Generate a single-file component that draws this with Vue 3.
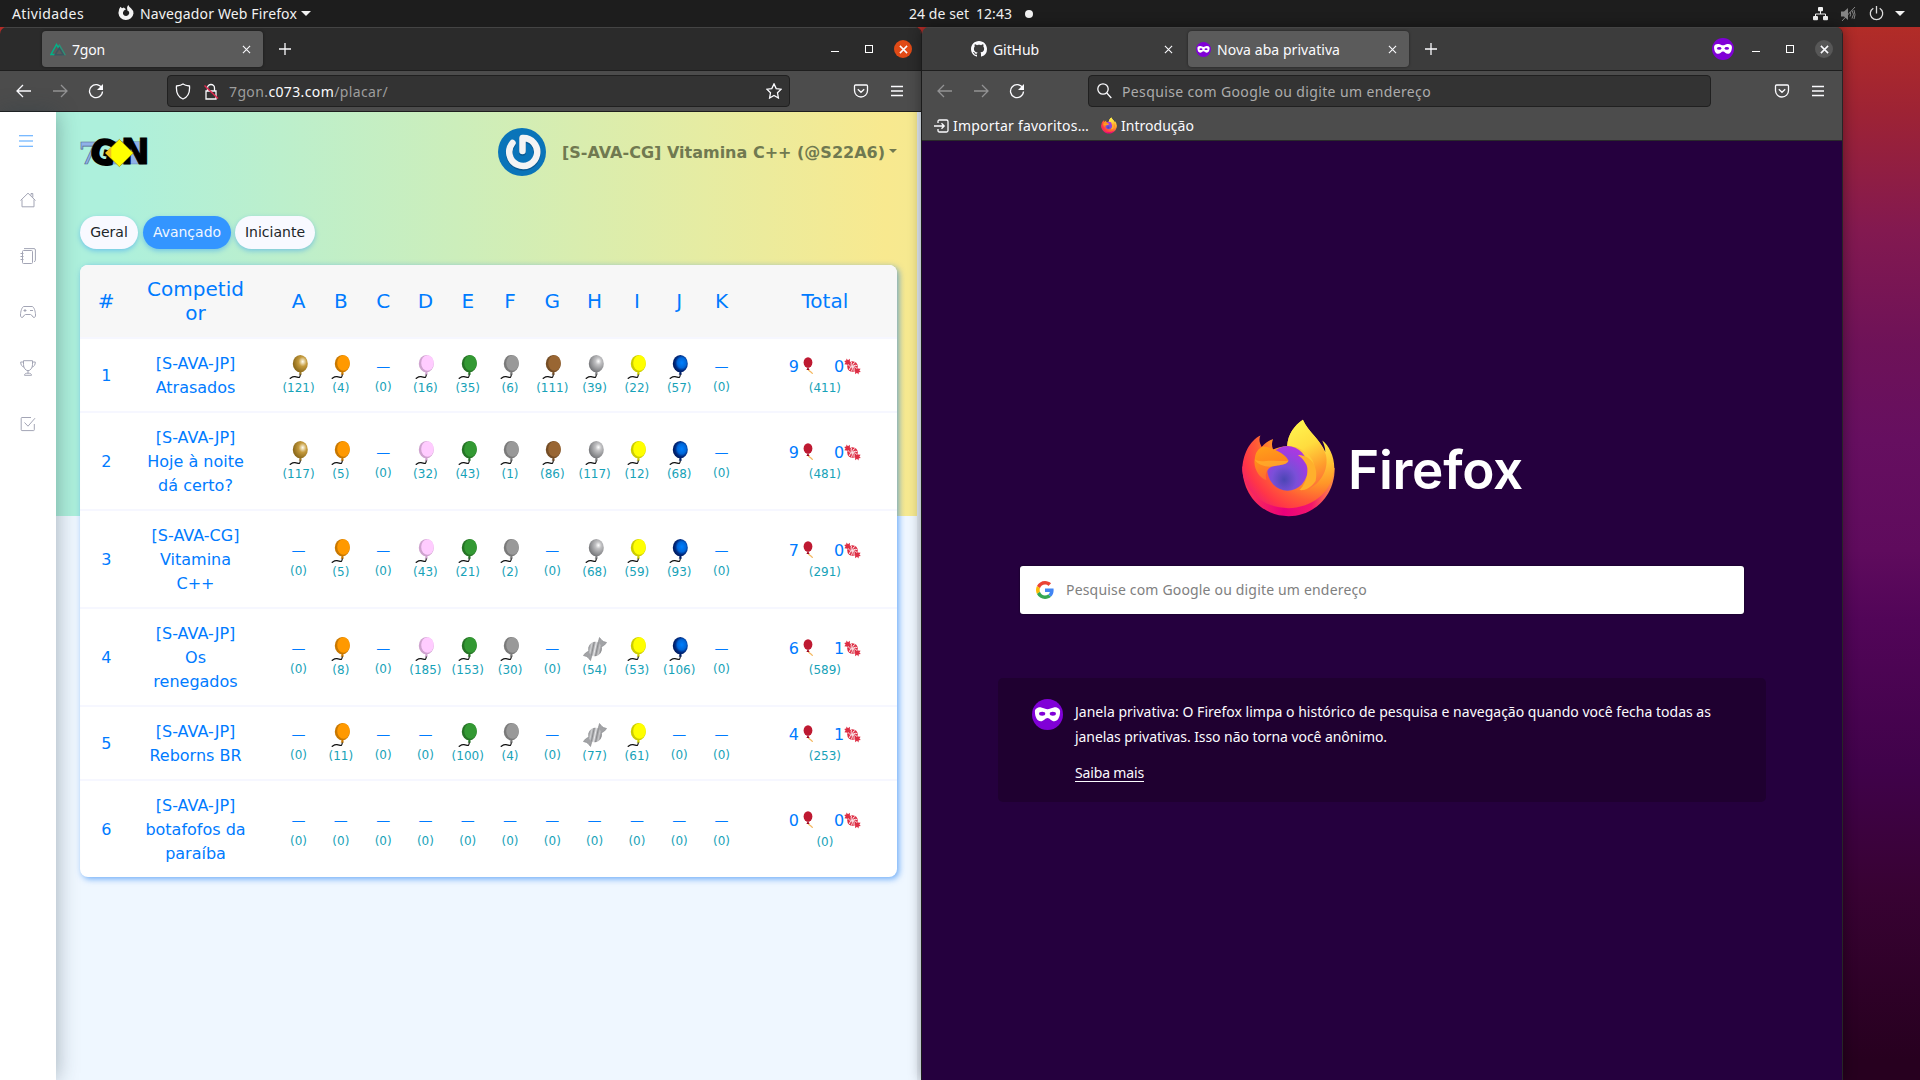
<script setup>
const letters = ['A', 'B', 'C', 'D', 'E', 'F', 'G', 'H', 'I', 'J', 'K']
const colors = {
  B: ['#c87800', '#ff9900'],
  D: ['#cfa3cf', '#ffccff'],
  E: ['#267326', '#339933'],
  F: ['#7a7a7a', '#999999'],
  G: ['#744d26', '#996633'],
  I: ['#cccc00', '#ffff00'],
  J: ['#001f6b', '#0073e6'],
}
const rows = [
  { pos: 1, name: '[S-AVA-JP]\nAtrasados', t: [121, 4, 0, 16, 35, 6, 111, 39, 22, 57, 0], ok: 9, candy: 0, sum: 411 },
  { pos: 2, name: '[S-AVA-JP]\nHoje à noite\ndá certo?', t: [117, 5, 0, 32, 43, 1, 86, 117, 12, 68, 0], ok: 9, candy: 0, sum: 481 },
  { pos: 3, name: '[S-AVA-CG]\nVitamina\nC++', t: [0, 5, 0, 43, 21, 2, 0, 68, 59, 93, 0], ok: 7, candy: 0, sum: 291 },
  { pos: 4, name: '[S-AVA-JP]\nOs\nrenegados', t: [0, 8, 0, 185, 153, 30, 0, 54, 53, 106, 0], ok: 6, candy: 1, sum: 589, sweet: 'H' },
  { pos: 5, name: '[S-AVA-JP]\nReborns BR', t: [0, 11, 0, 0, 100, 4, 0, 77, 61, 0, 0], ok: 4, candy: 1, sum: 253, sweet: 'H' },
  { pos: 6, name: '[S-AVA-JP]\nbotafofos da\nparaíba', t: [0, 0, 0, 0, 0, 0, 0, 0, 0, 0, 0], ok: 0, candy: 0, sum: 0 },
]
const nameHead = 'Competid\nor'
const sideIcons = ['home', 'notes', 'gamepad', 'trophy', 'check']

// Tracks a label so that it fills the given width.
const vFit = {
  mounted(el, { value }) {
    const w = el.getBoundingClientRect().width
    const n = el.textContent.length
    el.style.letterSpacing = ((value - w) / n).toFixed(3) + 'px'
  },
}
</script>

<template>
  <div class="desktop">
    <svg class="defs" width="0" height="0">
      <defs>
        <radialGradient id="gGold" cx="66%" cy="38%" r="62%"><stop offset="0" stop-color="#fffdf2" /><stop offset=".18" stop-color="#e8d6a8" /><stop offset=".45" stop-color="#c49a3c" /><stop offset="1" stop-color="#8f6c1c" /></radialGradient>
        <radialGradient id="gSilver" cx="64%" cy="36%" r="65%"><stop offset="0" stop-color="#fff" /><stop offset=".3" stop-color="#c2c2c4" /><stop offset="1" stop-color="#77787b" /></radialGradient>
        <radialGradient id="gNavy" cx="60%" cy="45%" r="58%"><stop offset="0" stop-color="#0080ff" /><stop offset=".5" stop-color="#0066d8" /><stop offset=".75" stop-color="#002a80" /><stop offset="1" stop-color="#001a5c" /></radialGradient>
        <linearGradient id="gCandy" x1="0" y1="0" x2="1" y2="0"><stop offset="0" stop-color="#85868a" /><stop offset=".2" stop-color="#d0d1d3" /><stop offset=".34" stop-color="#8a8b8e" /><stop offset=".5" stop-color="#e8e8ea" /><stop offset=".64" stop-color="#8a8b8e" /><stop offset=".8" stop-color="#c8c8ca" /><stop offset="1" stop-color="#77787b" /></linearGradient>
        <radialGradient id="fxBody" gradientUnits="userSpaceOnUse" cx="300" cy="110" r="270"><stop offset="0" stop-color="#fff44f" /><stop offset=".3" stop-color="#ffc435" /><stop offset=".52" stop-color="#ff9628" /><stop offset=".72" stop-color="#ff5b36" /><stop offset=".88" stop-color="#ff3647" /><stop offset="1" stop-color="#f0206a" /></radialGradient>
        <linearGradient id="fxRim" x1="0" y1="0" x2="1" y2="0"><stop offset="0" stop-color="#ff3750" /><stop offset=".45" stop-color="#e8007a" /><stop offset=".75" stop-color="#f5156c" /><stop offset="1" stop-color="#ff9640" /></linearGradient>
        <linearGradient id="fxTail" x1=".3" y1="0" x2=".6" y2="1"><stop offset="0" stop-color="#fff44f" /><stop offset=".4" stop-color="#ffdc3e" /><stop offset=".75" stop-color="#ff9d2c" /><stop offset="1" stop-color="#ff7139" /></linearGradient>
        <radialGradient id="fxGlobe" cx=".42" cy=".75" r=".85"><stop offset="0" stop-color="#4b46b4" /><stop offset=".35" stop-color="#7a4fd8" /><stop offset=".65" stop-color="#9a3fe0" /><stop offset="1" stop-color="#b833e1" /></radialGradient>
        <linearGradient id="fxHead" x1="0" y1="0" x2=".25" y2="1"><stop offset="0" stop-color="#ffa21a" /><stop offset=".5" stop-color="#ff8a1c" /><stop offset="1" stop-color="#ff6a34" /></linearGradient>

        <symbol id="fox" viewBox="62 58 284 292">
          <path fill="url(#fxRim)" d="M66 200C66 290 130 348 204 348S342 290 342 205L300 180L100 180Z" />
          <path fill="url(#fxBody)" d="M120 107C88 122 66 165 66 212C74 285 140 324 204 324S335 282 341 205C341 168 324 136 305 122C309 132 314 142 314 156C297 116 262 96 247 60C222 76 202 104 200 139C184 139 170 143 158 149C153 137 154 127 158 117C142 123 132 132 124 141C117 130 115 118 120 107Z" />
          <path fill="url(#fxTail)" d="M247 60C222 76 202 104 200 139C230 138 255 150 275 180C292 215 282 245 262 268C300 250 325 210 316 165C300 118 262 96 247 60Z" />
          <ellipse cx="201" cy="205" rx="61" ry="67" fill="url(#fxGlobe)" />
          <path fill="#ffb02c" d="M232 165C266 165 296 195 285 243C270 265 252 272 237 270C262 245 268 205 253 187C247 177 240 170 232 165Z" />
          <path fill="url(#fxHead)" d="M124 141C133 137 148 143 158 148C180 156 198 168 204 182C198 196 172 194 158 199C142 203 132 218 138 240C118 235 98 205 103 178C105 160 110 150 124 141Z" />
          <path fill="#ffb92f" opacity=".6" d="M103 178C116 188 134 182 152 182C172 182 190 184 204 182C198 196 172 194 158 199C142 203 110 196 103 178Z" />
        </symbol>
        <symbol id="mask" viewBox="0 0 32 32">
          <circle cx="16" cy="16" r="16" fill="#8000d7" />
          <path fill="#fff" d="M3 13C3 10 6 8.300 9.500 8.700C12 9 14 10.600 16 10.600S20 9 22.500 8.700C26 8.300 29 10 29 13C29 19 26.500 23 23 23C20 23 18.300 19.600 16 19.600S12 23 9 23C5.500 23 3 19 3 13Z" />
          <ellipse cx="10.500" cy="15.200" rx="3.200" ry="2" fill="#8000d7" /><ellipse cx="21.500" cy="15.200" rx="3.200" ry="2" fill="#8000d7" />
        </symbol>
        <symbol id="back" viewBox="0 0 16 16"><path d="M1 8h14M7 2L1 8l6 6" /></symbol>
        <symbol id="fwd" viewBox="0 0 16 16"><path d="M1 8h14M9 2l6 6-6 6" /></symbol>
        <symbol id="reload" viewBox="0 0 16 16"><path d="M13.800 5.200A6.500 6.500 0 1 0 14.500 8.500" /><path fill="#fbfbfe" stroke="none" d="M15 1v6h-6z" /></symbol>
        <symbol id="pocket" viewBox="0 0 16 16"><path d="M2.500 2h11q1 0 1 1v4.500a6.500 6.500 0 0 1-13 0V3q0-1 1-1zM4.800 6.200L8 9.300l3.200-3.100" /></symbol>
        <symbol id="menu" viewBox="0 0 14 14"><path d="M1 2.500h12M1 7h12M1 11.500h12" /></symbol>
        <symbol id="x" viewBox="0 0 10 10"><path d="M1 1l8 8M9 1l-8 8" /></symbol>
        <symbol id="plus" viewBox="0 0 12 12"><path d="M6 0v12M0 6h12" /></symbol>
        <symbol id="home" viewBox="0 0 16 16"><path d="M.500 8.500L8 1.200l7.500 7.300M2 7.500v7.300h12V7.500M11 3.500V1.500h1.800v4" /></symbol>
        <symbol id="notes" viewBox="0 0 16 16"><path d="M2.500 3.500q0-1 1-1h8q1 0 1 1v11q0 1-1 1h-8q-1 0-1-1zM4 .600h10q1.400 0 1.400 1.400v10.500q0 1-1.400 1M.500 5.500h3M.500 8.500h3M.500 11.500h3" /></symbol>
        <symbol id="gamepad" viewBox="0 0 16 16"><path d="M4 2.500h8c2 0 3.500 5 3.500 8.500 0 1.500-.500 2.500-1.500 2.500-1.500 0-2-3-3.500-3h-5c-1.500 0-2 3-3.500 3-1 0-1.500-1-1.500-2.500C.500 7.500 2 2.500 4 2.500zM5 5v3M3.500 6.500h3M10 6.500h3" /></symbol>
        <symbol id="trophy" viewBox="0 0 16 16"><path d="M3.500.700h9v4c0 3-2 6-4.500 6s-4.500-3-4.500-6zM3.500 2H.700c0 3 1.300 4.700 3.300 5M12.500 2h2.800c0 3-1.300 4.700-3.300 5M8 10.700v2.500M4.500 15.300c0-1.500 1-2.100 3.500-2.100s3.500.600 3.500 2.100z" /></symbol>
        <symbol id="check" viewBox="0 0 16 16"><path d="M11 1.500H2q-.800 0-.800.800v11.500q0 .800.800.800h11.500q.800 0 .800-.800V8M4.500 6.500L8 10.200l7-8" /></symbol>
        <symbol id="miniBalloon" viewBox="0 0 12 18"><path d="M5.500 12c-1 2.500 3.500 2 4 5" fill="none" stroke="#f4b860" stroke-width="1.200" /><ellipse cx="5" cy="5.500" rx="4.400" ry="5.200" fill="#be1931" /><path fill="#a0041e" d="M5 10l-1.600 3h3.200z" /></symbol>
        <symbol id="miniCandy" viewBox="0 0 17 17"><path fill="#dd2e44" d="M6 5.500L5.800.800 4 2.200 2.500.600 2.200 2.600.200 3 1.600 4.500.400 6.200 5.500 7zM11 11.500l.2 4.700 1.800-1.400 1.500 1.700.3-2.200 2-.300-1.400-1.600 1.200-1.600-5.100-.600z" /><circle cx="8.500" cy="8.500" r="5.300" fill="#dd2e44" /><path d="M8.500 8.500q0-3.500 2.500-4M8.500 8.500q-2.500-2.500-1-4.500M8.500 8.500q-3.500 0-4.500-2M8.500 8.500q-3.500 1-3 3.500M8.500 8.500q0 3-1 4.800M8.500 8.500q2.500 2 1.500 4.500M8.500 8.500q3 0 4.500 2M8.500 8.500q3-2 4.600-1" fill="none" stroke="#fbe4e7" stroke-width="1" /></symbol>
      </defs>
    </svg>

    <header class="topbar">
      <span v-fit="72" class="t-act">Atividades</span>
      <svg class="t-fx" width="16" height="16" viewBox="0 0 16 16"><path fill="#f2f2f2" d="M2.500 1.800L4 3.300 5.800 2.500 8 4.200 6 5.500Q4.500 7 5 9a3.300 3.300 0 0 0 6.200-.5C11.500 7 10.500 6 9.500 5.800L9 3Q9.300 1 10.300 0 11 1.800 13 3.200 15.700 5.500 15.500 8.500A7.600 7.600 0 0 1 .400 8Q.500 4 2.500 1.800z" /></svg>
      <span v-fit="157" class="t-app">Navegador Web Firefox</span>
      <i class="tri t-tri"></i>
      <span v-fit="60" class="t-date">24 de set</span>
      <span v-fit="36" class="t-time">12:43</span>
      <i class="dot"></i>
      <div class="tray">
        <svg width="15" height="14" viewBox="0 0 15 14"><path d="M7.500 3v4M2.500 10V7h10v3" fill="none" stroke="#f2f2f2" /><rect x="5" y="0" width="5" height="4.200" rx="1" fill="#f2f2f2" /><rect x="0" y="9" width="5" height="4.200" rx="1" fill="#f2f2f2" /><rect x="10" y="9" width="5" height="4.200" rx="1" fill="#f2f2f2" /></svg>
        <svg width="15" height="14" viewBox="0 0 15 14" fill="none" stroke="#858585"><path fill="#858585" stroke="none" d="M0 4.500h3L7 1v12L3 9.500H0z" /><path d="M1 14L14 0M9 5q1.500 2 0 4.500M11 3.500q3 3.500 0 8M13 3q2 5 0 9" /></svg>
        <svg width="15" height="15" viewBox="0 0 15 15" fill="none" stroke="#dcdcdc" stroke-width="1.300"><path d="M4.300 2.200A6.200 6.200 0 1 0 10.700 2.200M7.500 0v7.500" /></svg>
        <i class="tri"></i>
      </div>
    </header>

    <div class="windows">
      <section class="win left">
        <div class="tabs tabs-l">
          <div class="tab tab-on">
            <svg width="16" height="13" viewBox="0 0 16 13" fill="none" stroke-width="1.500"><path stroke="#00b388" d="M5 11.500H1L6.500 1.500 9 6M8.500 2.500L11 6" /><path stroke="#2f8f76" d="M9 1.500l5.800 10H12" /><path stroke="#3e5560" d="M5.200 11.700L9.300 5l4 6.700z" /></svg>
            <span v-fit="33">7gon</span>
            <svg class="ln tx" width="9" height="9"><use href="#x" /></svg>
          </div>
          <svg class="ln plus" width="12" height="12"><use href="#plus" /></svg>
          <div class="ctrl">
            <i class="min"></i><i class="max"></i>
            <b class="close orange"><svg class="ln" width="9" height="9"><use href="#x" /></svg></b>
          </div>
        </div>
        <div class="tools">
          <svg class="ln" width="16" height="16"><use href="#back" /></svg>
          <svg class="ln dim" width="16" height="16"><use href="#fwd" /></svg>
          <svg class="ln" width="16" height="16"><use href="#reload" /></svg>
          <div class="url">
            <svg class="ln" width="16" height="17" viewBox="0 0 16 17"><path d="M8 1Q10 2.500 14.500 3C15 9 13 14 8 16 3 14 1 9 1.500 3Q6 2.500 8 1z" /></svg>
            <svg class="ln lock" width="16" height="17" viewBox="0 0 16 17"><path d="M4.500 8V5a3.500 3.500 0 0 1 7 0v3M3 8h10v8H3z" /><path stroke="#e22850" stroke-width="1.500" d="M1.500 2.500L15 15.500" /></svg>
            <span v-fit="159" class="addr">7gon.<em>c073.com</em>/placar/</span>
            <svg class="ln star" width="16" height="16" viewBox="0 0 16 16"><path d="M8 .900l2.200 4.700 4.900.600-3.600 3.600.900 5.200L8 12.500 3.600 15l.900-5.200L.900 6.200l4.900-.600z" /></svg>
          </div>
          <svg class="ln pk" width="16" height="16"><use href="#pocket" /></svg>
          <svg class="ln" width="14" height="14"><use href="#menu" /></svg>
        </div>
        <div class="page">
          <nav class="side">
            <svg class="burger" width="14" height="12" viewBox="0 0 14 12"><path d="M0 .750h14M0 6h14M0 11.250h14" /></svg>
            <svg v-for="s in sideIcons" :key="s" class="si" width="16" height="16"><use :href="'#' + s" /></svg>
          </nav>
          <main class="main">
            <div class="head">
              <svg class="logo" width="80" height="60" viewBox="228 38 240 180">
                <text x="236" y="161" font-family="DejaVu Serif, serif" font-weight="700" font-size="92" textLength="58" lengthAdjust="spacingAndGlyphs" fill="#8fb1e8" stroke="#50688f" stroke-width="2">7</text>
                <rect x="335" y="94" width="96" height="67" fill="#8fb1e8" stroke="#50688f" />
                <text x="272" y="160" font-family="DejaVu Sans, sans-serif" font-weight="700" font-size="100" textLength="76" lengthAdjust="spacingAndGlyphs" stroke="#000" stroke-width="7" transform="rotate(12 308 128)">G</text>
                <text x="362" y="161" font-family="DejaVu Sans, sans-serif" font-weight="700" font-size="105" textLength="87" lengthAdjust="spacingAndGlyphs" stroke="#000" stroke-width="3">N</text>
                <path d="M358 87L400 128 358 169 316 128z" fill="#ffff00" stroke="#7a6a10" stroke-width="1.500" /><path d="M334 111v34L316 128z" fill="#f2c21c" />
              </svg>
              <div class="user">
                <svg width="48" height="48" viewBox="0 0 48 48"><circle cx="24" cy="24" r="24" fill="#0a74b9" /><path d="M14.500 15A14 14 0 1 0 24.500 10V23" fill="none" stroke="#0a5a93" stroke-width="7" stroke-linecap="round" transform="translate(0 1.200)" /><path d="M14.500 15A14 14 0 1 0 24.500 10V23" fill="none" stroke="#f4f4f4" stroke-width="6.500" stroke-linecap="round" stroke-linejoin="round" /></svg>
                <span v-fit="323">[S-AVA-CG] Vitamina C++ (@S22A6)</span>
                <i class="caret"></i>
              </div>
            </div>
            <div class="pills"><span class="pill p1">Geral</span><span class="pill on">Avançado</span><span class="pill p3">Iniciante</span></div>
            <div class="board">
              <div class="row hd">
                <span>#</span><span class="nm">{{ nameHead }}</span>
                <span v-for="(l, i) in letters" :key="l" :class="{ first: i === 0 }">{{ l }}</span>
                <span class="tot">Total</span>
              </div>
              <div v-for="r in rows" :key="r.pos" class="row body">
                <span>{{ r.pos }}</span><span class="nm">{{ r.name }}</span>
                <div v-for="(l, i) in letters" :key="l" class="cell" :class="{ first: i === 0, none: !r.t[i] }">
                  <span v-if="!r.t[i]" class="dash">—</span>
                  <svg v-else-if="r.sweet === l" width="24" height="24" viewBox="0 0 24 24">
                    <path fill="#a2a3a6" stroke="#85868a" stroke-width=".6" d="M14.500 7.500L16.500.500 19 3.500 20.500 4.500 23.600 5.500 21.500 8 17.500 10.500zM9.500 16.500L7.500 23.500 5 20.500 3.500 19.500.400 18.500 2.500 16 6.500 13.500z" />
                    <ellipse cx="12" cy="12" rx="6.800" ry="7.300" transform="rotate(12 12 12)" fill="url(#gCandy)" />
                  </svg>
                  <svg v-else class="bl" width="20" height="24" viewBox="0 0 20 24">
                    <path d="M11.300 19C11.300 24 9.500 22 6 21.700S2.500 23 .700 23.600" fill="none" stroke="#111" stroke-width="1.200" />
                    <template v-if="l === 'A' || l === 'H' || l === 'J'">
                      <path :fill="l === 'A' ? '#9c7a28' : l === 'H' ? '#808184' : '#001f6b'" d="M10.300 15.500h2.400l-.400 2.500.800 1.500h-3.400l.800-1.500z" />
                      <ellipse cx="11.300" cy="8.700" rx="7.500" ry="8.700" :fill="l === 'A' ? 'url(#gGold)' : l === 'H' ? 'url(#gSilver)' : 'url(#gNavy)'" />
                    </template>
                    <template v-else>
                      <path :fill="colors[l][0]" d="M10.300 15.500h2.400l-.400 2.500.800 1.500h-3.400l.800-1.500z" />
                      <ellipse cx="11.300" cy="8.700" rx="7.500" ry="8.700" :fill="colors[l][0]" />
                      <ellipse cx="12.500" cy="8" rx="6.300" ry="7.800" :fill="colors[l][1]" />
                    </template>
                  </svg>
                  <small>({{ r.t[i] }})</small>
                </div>
                <div class="tot cell">
                  <div class="sum"><span>{{ r.ok }}</span><svg class="mb" width="12" height="18"><use href="#miniBalloon" /></svg><span>{{ r.candy }}</span><svg width="17" height="17"><use href="#miniCandy" /></svg></div>
                  <small>({{ r.sum }})</small>
                </div>
              </div>
            </div>
          </main>
        </div>
      </section>

      <section class="win right">
        <div class="tabs tabs-r">
          <div class="tab tab-off">
            <svg width="16" height="16" viewBox="0 0 16 16"><path fill="#fbfbfe" d="M8 0C3.580 0 0 3.580 0 8c0 3.540 2.290 6.530 5.470 7.590.4.070.55-.17.55-.38 0-.19-.01-.82-.01-1.490-2.010.37-2.530-.49-2.690-.94-.09-.23-.48-.94-.82-1.130-.28-.15-.68-.52-.01-.53.63-.01 1.080.58 1.230.82.72 1.210 1.870.87 2.330.66.07-.52.28-.87.51-1.070-1.780-.2-3.640-.89-3.640-3.950 0-.87.31-1.590.82-2.150-.08-.2-.36-1.020.08-2.120 0 0 .67-.21 2.200.82.64-.18 1.320-.27 2-.27s1.360.09 2 .27c1.530-1.040 2.200-.82 2.200-.82.44 1.100.16 1.920.08 2.120.51.56.82 1.270.82 2.150 0 3.070-1.870 3.750-3.650 3.950.29.25.54.73.54 1.480 0 1.070-.01 1.930-.01 2.200 0 .21.15.46.55.38A8.010 8.010 0 0 0 16 8c0-4.420-3.580-8-8-8z" /></svg>
            <span v-fit="46">GitHub</span>
            <svg class="ln tx" width="9" height="9"><use href="#x" /></svg>
          </div>
          <div class="tab tab-on">
            <svg width="15" height="15"><use href="#mask" /></svg>
            <span v-fit="123">Nova aba privativa</span>
            <svg class="ln tx" width="9" height="9"><use href="#x" /></svg>
          </div>
          <svg class="ln plus" width="12" height="12"><use href="#plus" /></svg>
          <div class="ctrl">
            <svg class="bigmask" width="22" height="22"><use href="#mask" /></svg>
            <i class="min"></i><i class="max"></i>
            <b class="close gray"><svg class="ln" width="9" height="9"><use href="#x" /></svg></b>
          </div>
        </div>
        <div class="tools">
          <svg class="ln dim" width="16" height="16"><use href="#back" /></svg>
          <svg class="ln dim" width="16" height="16"><use href="#fwd" /></svg>
          <svg class="ln" width="16" height="16"><use href="#reload" /></svg>
          <div class="url">
            <svg class="ln" width="15" height="16" viewBox="0 0 15 16"><circle cx="6" cy="6" r="5.200" /><path d="M9.800 10l4.500 5" /></svg>
            <span v-fit="309" class="addr ph">Pesquise com Google ou digite um endereço</span>
          </div>
          <svg class="ln pk" width="16" height="16"><use href="#pocket" /></svg>
          <svg class="ln" width="14" height="14"><use href="#menu" /></svg>
        </div>
        <div class="marks">
          <svg class="ln" width="15" height="14" viewBox="0 0 15 14"><path d="M4 4V2.500q0-1.500 1.500-1.500h7q1.500 0 1.500 1.500v9q0 1.500-1.500 1.500h-7Q4 13 4 11.500V10M0 7h10M7.500 4.300L10.200 7 7.500 9.700" /></svg>
          <span v-fit="136" class="m1">Importar favoritos…</span>
          <svg width="16" height="17"><use href="#fox" /></svg>
          <span v-fit="73" class="m2">Introdução</span>
        </div>
        <div class="newtab">
          <div class="brand"><svg width="95" height="98"><use href="#fox" /></svg><span v-fit="175" class="word">Firefox</span></div>
          <div class="search">
            <svg width="18" height="18" viewBox="0 0 48 48"><path fill="#EA4335" d="M24 9.500c3.540 0 6.710 1.220 9.210 3.600l6.850-6.850C35.900 2.380 30.470 0 24 0 14.620 0 6.510 5.380 2.560 13.220l7.980 6.190C12.430 13.720 17.740 9.500 24 9.500z" /><path fill="#4285F4" d="M46.980 24.550c0-1.570-.15-3.090-.38-4.550H24v9.020h12.940c-.58 2.960-2.260 5.480-4.780 7.180l7.730 6c4.510-4.180 7.090-10.360 7.090-17.650z" /><path fill="#FBBC05" d="M10.530 28.590c-.48-1.450-.76-2.990-.76-4.590s.27-3.140.76-4.590l-7.980-6.190C.92 16.460 0 20.120 0 24c0 3.880.92 7.540 2.560 10.780l7.970-6.190z" /><path fill="#34A853" d="M24 48c6.480 0 11.930-2.130 15.890-5.810l-7.730-6c-2.150 1.450-4.920 2.300-8.160 2.300-6.260 0-11.570-4.220-13.470-9.910l-7.980 6.190C6.510 42.620 14.620 48 24 48z" /></svg>
            <span v-fit="301">Pesquise com Google ou digite um endereço</span>
          </div>
          <div class="info">
            <svg width="31" height="31"><use href="#mask" /></svg>
            <div class="copy">
              <span v-fit="636">Janela privativa: O Firefox limpa o histórico de pesquisa e navegação quando você fecha todas as</span>
              <span v-fit="312">janelas privativas. Isso não torna você anônimo.</span>
              <span v-fit="69" class="more">Saiba mais</span>
            </div>
          </div>
        </div>
      </section>
    </div>
  </div>
</template>

<style>
body { margin: 0; background: #1d1d1d; }
</style>

<style scoped>
* { box-sizing: border-box; }
.desktop { width: 1920px; height: 1080px; overflow: hidden; display: flex; flex-direction: column; font-family: "Noto Sans", sans-serif; font-size: 14px; color: #fbfbfe; white-space: nowrap; background: linear-gradient(180deg, #b22c27 27px, #9e2334 110px, #831950 230px, #6e1258 345px, #660f60 440px, #5f0b5d 550px, #520558 620px, #40024a 770px, #380233 890px, #27001f 1060px); }
svg { display: block; flex: none; }
.defs { position: absolute; }
.ln { fill: none; stroke: #fbfbfe; stroke-width: 1.3; }
.dim { opacity: .4; }
span { display: inline-block; }

.topbar { height: 27px; flex: none; background: #1d1d1d; display: flex; align-items: center; padding: 0 15px 0 12px; color: #f2f2f2; line-height: 26px; }
.t-fx { margin-left: 34px; margin-top: -2px; }
.t-app { margin-left: 6px; }
.tri { border: 5px solid transparent; border-top: 5px solid #f2f2f2; border-bottom: 0; }
.t-tri { margin-left: 4px; }
.t-date { margin-left: 598px; }
.t-time { margin-left: 7px; }
.dot { width: 8px; height: 8px; border-radius: 50%; background: #f2f2f2; margin-left: 13px; }
.tray { margin-left: auto; display: flex; align-items: center; gap: 13px; }
.tray .tri { margin-left: -2px; }

.windows { flex: 1; display: flex; min-height: 0; }
.win { display: flex; flex-direction: column; overflow: hidden; border-radius: 7px 7px 0 0; }
.left { width: 922px; border-right: 1px solid #222; }
.right { width: 921px; border-right: 1px solid #262626; box-shadow: 0 0 14px rgba(0, 0, 0, .4); }
.tabs { height: 44px; flex: none; display: flex; align-items: center; border-bottom: 1px solid #1e1e1e; border-top: 1px solid #444; line-height: 36px; }
.tabs-l { background: #2b2b2b; padding-left: 42px; }
.tabs-r { background: #3c3c3c; padding-left: 41px; }
.tab { height: 36px; border-radius: 4px; display: flex; align-items: center; }
.tab > span { margin-left: 6px; margin-top: 2px; }
.tab-on { width: 221px; background: #5b5b5b; padding: 0 12px 0 8px; box-shadow: 0 0 3px rgba(0, 0, 0, .45); }
.tab-off { width: 225px; padding: 0 15px 0 8px; }
.tx { margin-left: auto; stroke-width: 1.2; }
.plus { margin-left: 16px; }
.ctrl { margin-left: auto; display: flex; align-items: center; padding-right: 9px; }
.min { width: 8px; height: 1px; background: #fff; margin: 5px 26px 0 0; }
.max { width: 8px; height: 8px; border: 1px solid #fff; margin-right: 21px; }
.close { width: 18px; height: 18px; border-radius: 50%; display: flex; align-items: center; justify-content: center; }
.close .ln { stroke-width: 1.7; }
.orange { background: #e04a16; }
.gray { background: #575757; }
.bigmask { margin-right: 18px; }

.tools { height: 40px; flex: none; display: flex; align-items: center; background: #4c4c4c; padding: 0 17px 0 16px; gap: 20px; }
.left .tools { height: 41px; border-bottom: 1px solid #1e1e1e; }
.right .tools { padding-left: 15px; }
.url { width: 623px; height: 32px; margin-left: 43px; background: #333; border: 1px solid #202020; border-radius: 4px; display: flex; align-items: center; padding: 0 4px 0 7px; }
.right .url { padding-left: 8px; }
.pk { margin-left: auto; margin-right: 1px; }
.lock { margin-left: 12px; }
.addr { margin-left: 10px; margin-top: 2px; color: #9d9d9d; line-height: 30px; }
.addr em { font-style: normal; color: #fbfbfe; }
.ph { color: #acacac; }
.star { margin-left: auto; margin-right: 3px; }
.marks { height: 30px; flex: none; display: flex; align-items: center; background: #4c4c4c; border-bottom: 1px solid #2a2a2a; padding: 0 0 0 12px; line-height: 28px; }
.m1 { margin: 0 12px 0 4px; }
.m2 { margin-left: 4px; }

.page { flex: 1; display: flex; min-height: 0; }
.side { width: 56px; background: #fff; padding: 23px 0 0 20px; display: flex; flex-direction: column; gap: 40px; z-index: 1; box-shadow: 0 0 22px rgba(40, 60, 70, .4); }
.burger { stroke: #4da3ff; stroke-width: 1.2; margin-left: -1px; margin-bottom: 5px; }
.si { fill: none; stroke: #a3a5b5; stroke-width: 1; }
.main { flex: 1; padding: 16px 20px 0 24px; font-family: "DejaVu Sans", sans-serif; background: linear-gradient(90deg, #adf0dc 60px, #cceebb 400px, #e6eca2 650px, #f8e98f 830px, #f6e990 855px) 0 0 / 100% 404px no-repeat #eff7ff; border-right: 4px solid rgba(200, 210, 220, .3); }
.head { display: flex; align-items: center; justify-content: space-between; height: 48px; }
.logo { margin-left: -4px; margin-top: 2px; }
.user { display: flex; align-items: center; font-weight: 700; font-size: 16px; color: #707950; }
.user span { margin: 0 4px 0 16px; }
.caret { border: 4px solid transparent; border-top-color: #707950; border-bottom: 0; margin-top: -3px; }
.pills { display: flex; margin-top: 40px; gap: 4px; }
.pill { height: 33px; line-height: 32px; border-radius: 17px; background: #f8f9ff; color: #212529; font-size: 14px; text-align: center; width: 88px; box-shadow: 0 2px 5px rgba(0, 123, 255, .35); }
.p1 { width: 58px; margin-right: 1px; }
.p3 { width: 80px; }
.on { background: #3395ff; color: #f0f7ff; }
.board { margin-top: 16px; width: 817px; border-radius: 8px; background: #fff; overflow: hidden; color: #007bff; font-size: 16px; line-height: 24px; text-align: center; box-shadow: 2px 2px 6px rgba(0, 110, 240, .55); }
.row { display: grid; grid-template-columns: 52.5px 126px 18.900px repeat(11, 42.3px) 11px 142.5px; align-items: center; border-top: 2px solid #f6f7ff; padding: 12px 0; }
.body { padding: 13px 0 11px; }
.hd { background: #f7f7f7; font-size: 20px; border-top: 0; }
.nm { white-space: pre; }
.first { grid-column: 4; }
.tot { grid-column: 16; }
.cell { display: flex; flex-direction: column; align-items: center; height: 40px; }
.cell > svg { margin-top: -1px; margin-bottom: 1px; }
.cell small { font-size: 12px; line-height: 16px; color: #17a2b8; }
.none small { margin-top: -1px; }
.dash { font-size: 14px; line-height: 22px; height: 25px; margin-top: -1px; }
.sum { display: flex; align-items: center; height: 24px; }
.sum span { line-height: 22px; margin-top: -3px; }
.sum svg { margin-top: -4px; }
.sum .mb { margin: -4px 19px 0 4px; }
.sum svg:last-child { margin-left: 0; }

.newtab { flex: 1; background: #25003e; padding-top: 278px; display: flex; flex-direction: column; }
.brand { display: flex; align-items: center; margin-left: 319px; height: 98px; }
.word { margin-left: 12px; margin-top: 3px; font: 600 53px/98px Inter, sans-serif; color: #fff; }
.search { margin: 49px 0 0 98px; width: 724px; height: 48px; background: #fff; border-radius: 3px; display: flex; align-items: center; padding-left: 16px; color: #808080; box-shadow: 0 0 2px #0e001c; }
.search span { margin-left: 12px; margin-top: -2px; }
.info { margin: 64px 0 0 76px; width: 768px; height: 124px; background: #1f0030; border-radius: 5px; padding: 21px 34px; display: flex; }
.copy { margin-left: 12px; display: flex; flex-direction: column; align-items: flex-start; line-height: 25px; }
.more { margin-top: 15px; line-height: 17px; border-bottom: 1px solid #fbfbfe; }
</style>
